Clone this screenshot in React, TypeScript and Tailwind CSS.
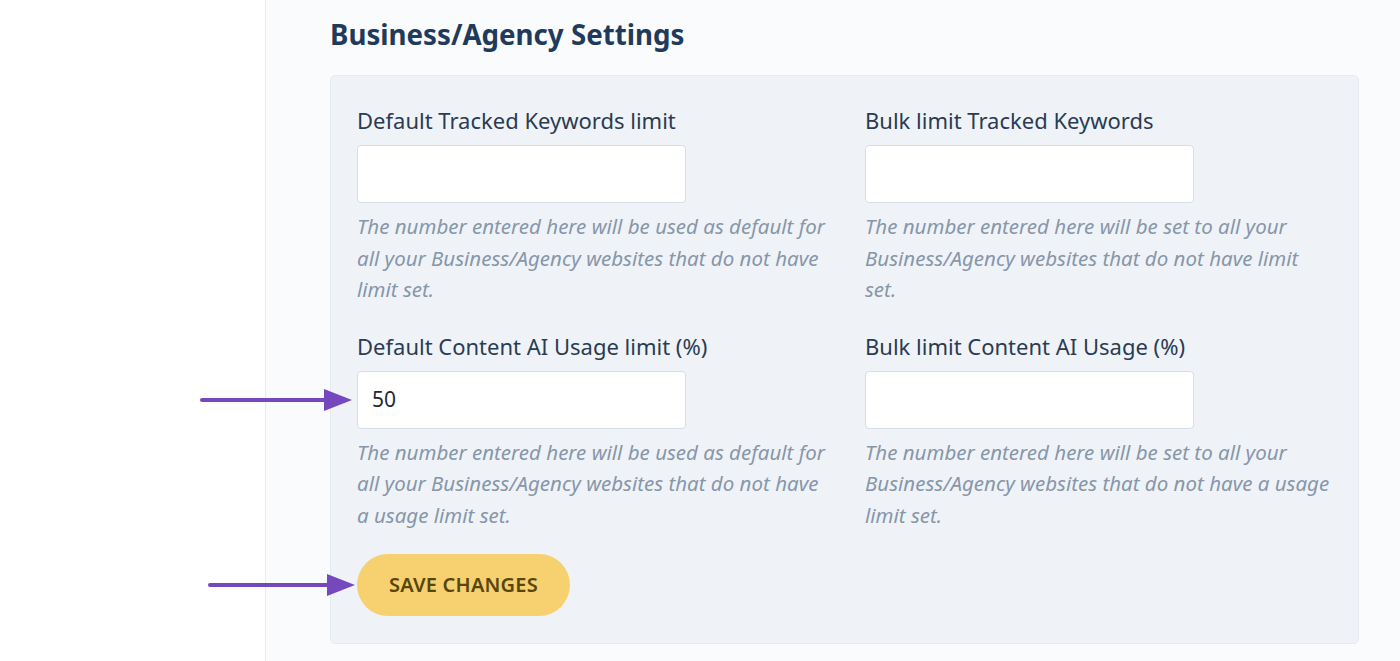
import React from "react";

const font = { fontFamily: '"Noto Sans", "Open Sans", sans-serif' };

function Arrow({ x1, x2, y }: { x1: number; x2: number; y: number }) {
  const w = x2 - x1 + 4;
  return (
    <svg
      className="absolute pointer-events-none"
      style={{ left: x1 - 2, top: y - 13 }}
      width={w}
      height={26}
      viewBox={`0 0 ${w} 26`}
    >
      <line x1={2} y1={13} x2={w - 24} y2={13} stroke="#7549bd" strokeWidth={4} strokeLinecap="round" />
      <polygon points={`${w - 30},2 ${w - 2},13 ${w - 30},24`} fill="#7549bd" />
    </svg>
  );
}

function Field({ label, value, desc }: { label: string; value?: string; desc: string }) {
  return (
    <div className="flex flex-col min-w-0">
      <label className="text-[22px] leading-[32px] text-[#2a3b52]">{label}</label>
      <div className="mt-[9px] w-[329px] h-[58px] bg-white border border-[#d6dee8] rounded-[4px] flex items-center px-[14px] text-[21px] text-[#1f2937]">
        {value}
      </div>
      <p className="mt-[8px] w-[468px] italic text-[20.5px] leading-[31.5px] text-[#8796a8]">{desc}</p>
    </div>
  );
}

export default function App() {
  return (
    <div className="relative w-[1400px] h-[661px] flex overflow-hidden bg-white" style={font}>
      <div className="w-[266px] shrink-0 bg-white border-r border-[#e8ebf0]" />
      <div className="flex-1 min-w-0 bg-[#fafbfd] pl-[64px] pr-[41px] pt-[15px]">
        <h2 className="text-[27.7px] leading-[38px] font-bold text-[#1f3a5a]">Business/Agency Settings</h2>
        <div className="mt-[22px] bg-[#eff3f8] border border-[#e6ebf1] rounded-[5px] pl-[26px] pr-[20px] pt-[28px] pb-[27px]">
          <div className="grid grid-cols-[508px_minmax(0,1fr)] gap-y-[24px]">
            <Field
              label="Default Tracked Keywords limit"
              desc="The number entered here will be used as default for all your Business/Agency websites that do not have limit set."
            />
            <Field
              label="Bulk limit Tracked Keywords"
              desc="The number entered here will be set to all your Business/Agency websites that do not have limit set."
            />
            <Field
              label="Default Content AI Usage limit (%)"
              value="50"
              desc="The number entered here will be used as default for all your Business/Agency websites that do not have a usage limit set."
            />
            <Field
              label="Bulk limit Content AI Usage (%)"
              desc="The number entered here will be set to all your Business/Agency websites that do not have a usage limit set."
            />
          </div>
          <button className="mt-[23px] h-[62px] px-[32px] rounded-full bg-[#f7d070] text-[#58470c] text-[20px] font-semibold tracking-[0.2px]">
            SAVE CHANGES
          </button>
        </div>
      </div>
      <Arrow x1={202} x2={352} y={400} />
      <Arrow x1={210} x2={355} y={585} />
    </div>
  );
}
